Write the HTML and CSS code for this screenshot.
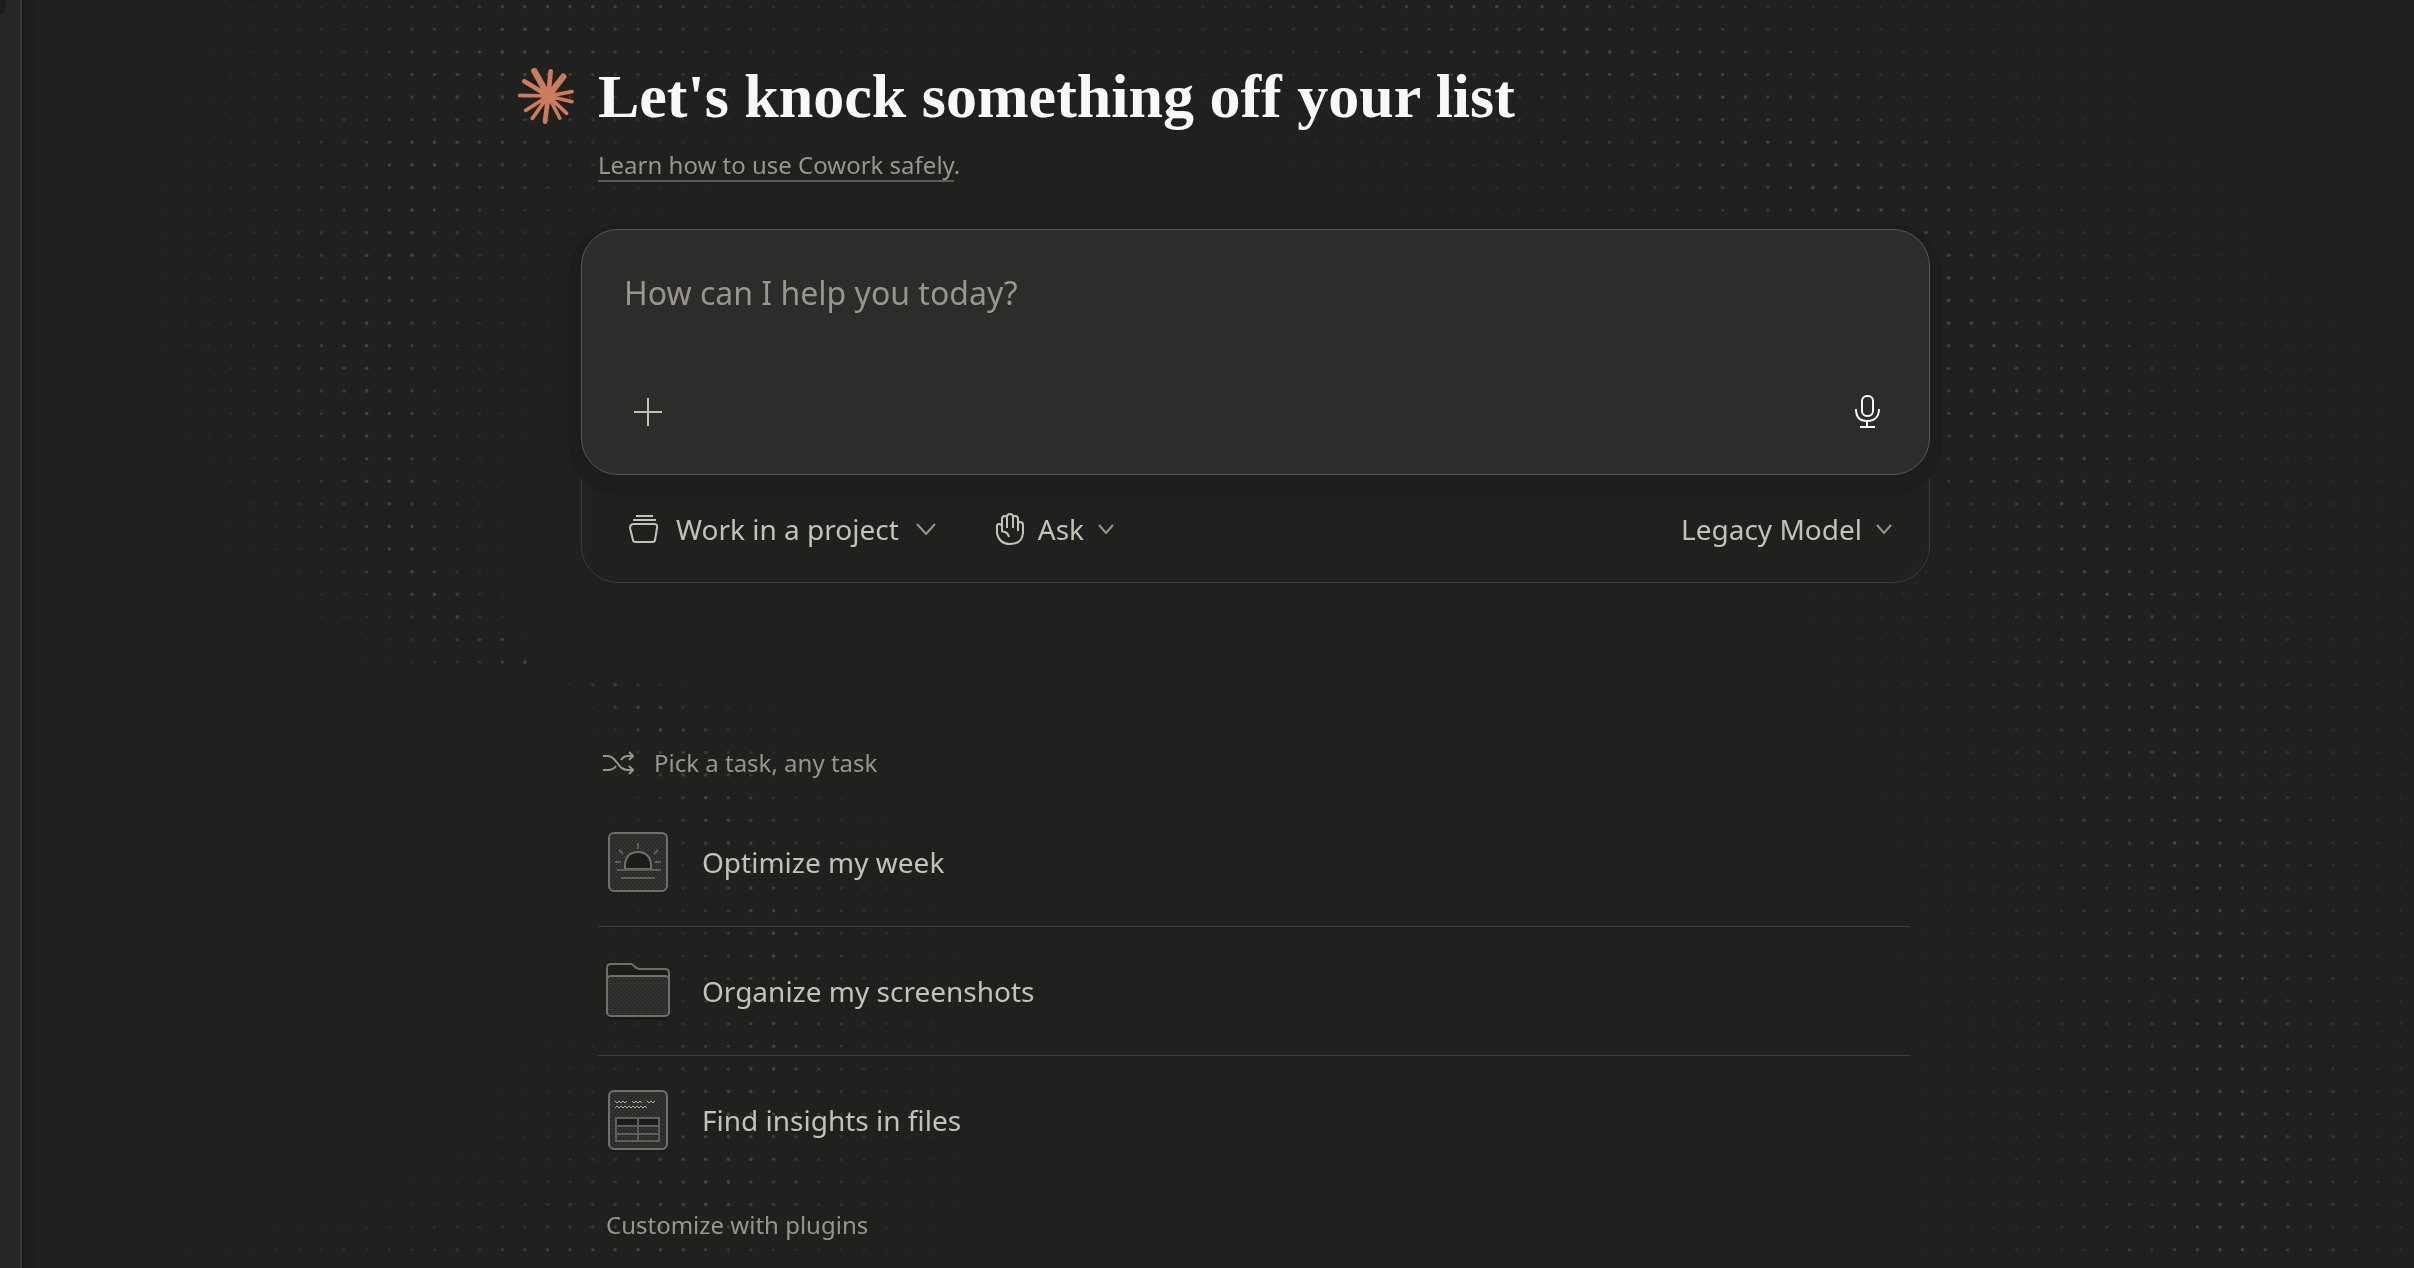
FILE: index.html
```html
<!DOCTYPE html>
<html lang="en">
<head>
<meta charset="utf-8">
<meta name="viewport" content="width=device-width, initial-scale=1">
<title>Cowork</title>
<link rel="stylesheet" href="styles.css">
</head>
<body>
<canvas class="dots" id="dots" aria-hidden="true"></canvas>
<div class="app">
  <aside class="rail" aria-label="Sidebar"></aside>
  <main class="main">
    <div class="column">
      <header class="hero">
        <svg class="logo" viewBox="54 84 168 168" aria-hidden="true">
          <g stroke-linecap="round" fill="none">
            <path stroke-width="19" d="M145 168L103 93M145 168L190 110"/>
            <path stroke-width="14" d="M145 168L152 94M145 168L73 124M145 168L135 245"/>
            <path stroke-width="11" d="M145 168L216 155M145 168L216 185M145 168L200 220M145 168L179 234M145 168L97 235M145 168L77 211M145 168L59 166"/>
          </g>
          <circle cx="146" cy="168" r="22" stroke="none"/>
        </svg>
        <div class="hero-text">
          <h1 class="title">Let's knock something off your list</h1>
          <p class="learn"><a class="learn-link" href="#safety">Learn how to use Cowork safely</a>.</p>
        </div>
      </header>

      <form class="composer">
        <div class="card">
          <textarea class="prompt" rows="1" aria-label="Prompt" placeholder="How can I help you today?"></textarea>
          <div class="card-actions">
            <button class="icon-button" type="button" aria-label="Add">
              <svg class="i28" viewBox="0 0 28 28"><path d="M14 0V28M0 14H28"/></svg>
            </button>
            <button class="icon-button mic" type="button" aria-label="Dictate">
              <svg class="i36" viewBox="0 0 36 36"><rect x="13" y="2" width="11" height="20" rx="5"/><path d="M7 15C7 23 11 27 18 27S30 23 30 15M18 27V33M11 33H26"/></svg>
            </button>
          </div>
        </div>
        <div class="toolbar">
          <button class="picker project" type="button">
            <svg class="i30" viewBox="0 0 30 30"><path d="M7 2H24M4 6H27M5 10H25Q29 10 28 14L26 26Q26 28 23 28H7Q4 28 4 26L1 14Q1 10 5 10Z"/></svg>
            <span>Work in a project</span>
            <svg class="chev-lg" viewBox="0 0 20 12"><path d="M1 1L10 11L19 1"/></svg>
          </button>
          <button class="picker" type="button">
            <svg class="hand" viewBox="0 0 28 32"><path d="M6 19V6Q6 3 9 3Q11 3 11 6V15M11 6V4Q11 1 14 1Q17 1 17 4V15M17 5Q17 3 19 3Q22 3 22 6V18M22 11Q22 9 24 9Q27 9 27 12V20Q26 31 14 31Q3 31 1 20V13Q1 11 3 11Q6 11 6 14M6 18Q7 19 9 19Q12 20 13 24"/></svg>
            <span>Ask</span>
            <svg class="chev" viewBox="0 0 16 10"><path d="M1 1L8 9L15 1"/></svg>
          </button>
          <button class="picker model" type="button">
            <span>Legacy Model</span>
            <svg class="chev" viewBox="0 0 16 10"><path d="M1 1L8 9L15 1"/></svg>
          </button>
        </div>
      </form>

      <section class="tasks" aria-labelledby="tasks-title">
        <h2 class="tasks-title" id="tasks-title">
          <svg class="shuffle" viewBox="0 0 32 24" aria-hidden="true"><path d="M1 5H6C15 5 15 19 26 19H31M1 19H6C9 19 12 18 14 15M19 9C21 6 23 5 26 5H31M27 1L31 5L27 9M27 15L31 19L27 23"/></svg>
          Pick a task, any task
        </h2>
        <ul class="list">
          <li class="item">
            <button class="task" type="button">
              <svg class="thumb" viewBox="0 0 64 64" aria-hidden="true">
                <defs>
                  <pattern id="grain" width="4" height="4" patternUnits="userSpaceOnUse">
                    <rect width="4" height="4" fill="#2c2c2a" stroke="none"/>
                    <path d="M0 0h1v1h-1zM2 2h1v1h-1z" fill="#434341" stroke="none"/>
                  </pattern>
                </defs>
                <rect x="3" y="6" width="58" height="58" rx="5" fill="#1a1a19" stroke="none"/>
                <rect class="sheet" x="3" y="3" width="58" height="58" rx="5"/>
                <path class="hole" d="M19 39C18 27 24 22 32 22S46 27 45 39Z"/>
                <path class="soft" d="M11 40H55M15 48H49M32 13V19M13 20L17 24M48 24L52 20M9 32H15M49 32H55"/>
              </svg>
              <span>Optimize my week</span>
            </button>
          </li>
          <li class="item">
            <button class="task" type="button">
              <svg class="thumb" viewBox="0 0 64 64" aria-hidden="true">
                <rect x="1" y="20" width="62" height="41" rx="4" fill="#1a1a19" stroke="none"/>
                <path class="hole" d="M1 54V9Q1 5 5 5H25C28 5 29 10 33 10H59Q63 10 63 14V54Z"/>
                <rect class="sheet" x="1" y="17" width="62" height="40" rx="4"/>
              </svg>
              <span>Organize my screenshots</span>
            </button>
          </li>
          <li class="item">
            <button class="task" type="button">
              <svg class="thumb" viewBox="0 0 64 64" aria-hidden="true">
                <rect x="3" y="6" width="58" height="58" rx="5" fill="#1a1a19" stroke="none"/>
                <rect class="sheet" x="3" y="3" width="58" height="58" rx="5"/>
                <path class="scribble" d="M9 13l2 2 2-2 2 2 2-2 2 2 2-2M26 13l2 2 2-2 2 2 2-2 2 2M41 13l2 2 2-2 2 2 2-2M9 20l2-2 2 2 2-2 2 2 2-2 2 2 2-2 2 2 2-2 2 2 2-2 2 2 2-2 2 2 2-2 2 2"/>
                <rect x="10" y="30" width="43" height="8" fill="#1c1c1b" stroke="none"/>
                <path class="soft" d="M10 30H53V53H10ZM10 38H53M10 46H53M32 30V53"/>
              </svg>
              <span>Find insights in files</span>
            </button>
          </li>
        </ul>
        <button class="plugins" type="button">Customize with plugins</button>
      </section>
    </div>
  </main>
</div>
<script src="dots.js"></script>
</body>
</html>
```
FILE: styles.css
```css
:root {
  --bg: #20201e;
  --card: #2c2c2a;
  --shade: #1d1d1c;
  --text: #c3c2b7;
  --muted: #97958c;
  --line: #3c3c3a;
}

* { box-sizing: border-box; }

body {
  margin: 0;
  background: var(--bg);
  color: var(--text);
  font-family: "Noto Sans", sans-serif;
  font-size: 28px;
  line-height: 40px;
}

button {
  margin: 0;
  padding: 0;
  border: 0;
  background: none;
  color: inherit;
  font: inherit;
  cursor: pointer;
}

svg {
  display: block;
  flex: none;
  fill: none;
  stroke: currentColor;
  stroke-width: 2;
}

.dots {
  position: absolute;
  inset: 0;
  width: 100%;
  height: 100%;
  z-index: -1;
}

.app {
  display: flex;
  min-height: 100vh;
}

.rail {
  position: relative;
  flex: none;
  width: 22px;
  overflow: hidden;
  background: #272725;
  border-right: 2px solid #3a3a38;
}

/* rounded corner of the panel tucked under the rail */
.rail::before {
  content: "";
  position: absolute;
  top: 0;
  left: 0;
  width: 6px;
  height: 14px;
  background: var(--shade);
  border-bottom-right-radius: 6px;
}

.main {
  flex: 1;
  display: flex;
  justify-content: center;
  padding: 60px 0 24px 12px;
  box-shadow: inset 14px 0 0 var(--shade);
}

.column {
  width: 100%;
  max-width: 1412px;
}

.hero {
  display: flex;
  align-items: flex-start;
  gap: 24px;
}

.logo {
  width: 56px;
  height: 56px;
  margin-top: 8px;
  color: #cb7c5e;
  fill: currentColor;
}

.title {
  margin: 0;
  color: #f8f8f6;
  font: bold 62px/72px "Liberation Serif", serif;
}

.learn {
  margin: 15px 0 0;
  color: var(--muted);
  font-size: 24px;
  line-height: 36px;
}

.learn-link {
  color: inherit;
  text-decoration: underline 2px #5c5b57;
  text-underline-offset: 6px;
  text-decoration-skip-ink: none;
}

.composer {
  margin: 46px 0 0 63px;
  border: 1px solid var(--line);
  border-radius: 37px;
  background: var(--bg);
  box-shadow: inset 0 0 0 3px var(--bg), inset 0 0 0 4px #252523;
}

.card {
  display: flex;
  flex-direction: column;
  justify-content: space-between;
  min-height: 246px;
  margin: -1px -1px 0;
  padding: 41px 36px 42px 40px;
  border: 1px solid #585855;
  border-radius: 37px;
  background: var(--card);
  box-shadow: 0 8px 0 12px var(--shade);
}

.prompt {
  display: block;
  width: 100%;
  height: 44px;
  padding: 0 2px;
  border: 0;
  outline: 0;
  resize: none;
  overflow: hidden;
  background: none;
  color: var(--text);
  font: 32px/44px "Noto Sans", sans-serif;
}

.prompt::placeholder { color: var(--muted); opacity: 1; }

.card-actions {
  display: flex;
  justify-content: space-between;
}

.icon-button {
  display: grid;
  place-items: center;
  width: 52px;
  height: 40px;
}

.mic { color: #f8f8f6; }
.i28 { width: 28px; height: 28px; }
.i30 { width: 30px; height: 30px; }
.i36 { width: 36px; height: 36px; }
.hand { width: 28px; height: 32px; }

.toolbar {
  position: relative;
  display: flex;
  align-items: center;
  gap: 60px;
  height: 107px;
  padding: 0 37px 0 47px;
}

.picker {
  display: flex;
  align-items: center;
  gap: 14px;
}

.project { gap: 17px; }
.model { margin-left: auto; }
.chev-lg { width: 20px; height: 12px; color: var(--muted); }
.chev { width: 16px; height: 10px; color: var(--muted); }

.tasks { margin: 160px 20px 0 80px; }

.tasks-title {
  display: flex;
  align-items: center;
  gap: 20px;
  margin: 0 0 15px;
  padding-left: 4px;
  color: var(--muted);
  font-size: 24px;
  font-weight: 400;
}

.shuffle { width: 32px; height: 24px; }

.list {
  margin: 0;
  padding: 0;
  list-style: none;
}

.item + .item { border-top: 1px solid var(--line); }

.task {
  display: flex;
  align-items: center;
  gap: 32px;
  width: 100%;
  height: 128px;
  padding-left: 8px;
  text-align: left;
}

.thumb { width: 64px; height: 64px; color: #70706b; }
.sheet { fill: url(#grain); }
.hole { fill: #1c1c1b; }
.soft { stroke: #5e5e5a; }
.scribble { stroke: #aeada3; stroke-width: 1; }

.plugins {
  display: block;
  margin: 23px 0 0 8px;
  color: var(--muted);
  font-size: 24px;
  line-height: 36px;
}
```
FILE: dots.js
```js
// Halftone backdrop: two bands of dots. Each row is [y, fade start, peak, fade end].
const BANDS = [
  [
    [0, 170, 570, 1060], [52, 170, 510, 1010], [98, 160, 460, 920], [143, 150, 435, 820],
    [190, 135, 420, 740], [234, 135, 400, 650], [300, 135, 380, 590], [348, 140, 368, 580],
    [393, 150, 370, 570], [480, 180, 388, 525], [550, 215, 411, 520], [573, 250, 420, 518],
    [595, 265, 445, 520], [617, 290, 457, 525], [640, 320, 500, 530], [663, 350, 525, 548],
    [685, 560, 605, 700], [707, 580, 625, 790], [730, 580, 655, 820], [797, 600, 706, 890],
    [865, 600, 745, 930], [935, 590, 775, 970], [1000, 585, 770, 985], [1047, 520, 762, 990],
    [1090, 480, 750, 990], [1160, 410, 730, 990], [1205, 310, 705, 985], [1280, 20, 600, 950]
  ],
  [
    [0, 900, 1500, 2140], [52, 960, 1600, 2170], [98, 1100, 1720, 2200], [190, 1290, 1850, 2260],
    [280, 1500, 1930, 2340], [350, 1620, 1990, 2400], [415, 1700, 2018, 2430], [480, 1740, 2063, 2450],
    [527, 1770, 2086, 2460], [600, 1780, 2120, 2470], [684, 1800, 2153, 2480], [774, 1850, 2176, 2490],
    [950, 1870, 2210, 2500], [1130, 1880, 2243, 2520], [1280, 1880, 2243, 2520]
  ]
];

function rowAt(band, y) {
  let i = 1;
  while (i < band.length - 1 && band[i][0] < y) i++;
  const a = band[i - 1], b = band[i];
  const t = Math.min(1, Math.max(0, (y - a[0]) / (b[0] - a[0])));
  return a.map((v, k) => v + (b[k] - v) * t);
}

function strength([, start, peak, end], x) {
  const d = x < peak ? (x - start) / (peak - start) : (end - x) / (end - peak);
  return Math.max(0, d);
}

function draw() {
  const canvas = document.getElementById('dots');
  const w = canvas.width = canvas.clientWidth;
  const h = canvas.height = canvas.clientHeight;
  const ctx = canvas.getContext('2d');
  const step = 22.6;
  ctx.fillStyle = '#c3c2b7';
  for (let y = 6.7; y < h; y += step) {
    const rows = BANDS.map(band => rowAt(band, y));
    for (let x = 5.1; x < w; x += step) {
      const s = Math.max(...rows.map(row => strength(row, x)));
      if (s < 0.04) continue;
      ctx.globalAlpha = 0.015 + 0.215 * Math.pow(s, 1.4);
      ctx.beginPath();
      ctx.arc(x, y, 1.5 + 0.3 * s, 0, Math.PI * 2);
      ctx.fill();
    }
  }
}

draw();
window.addEventListener('resize', draw);
```
